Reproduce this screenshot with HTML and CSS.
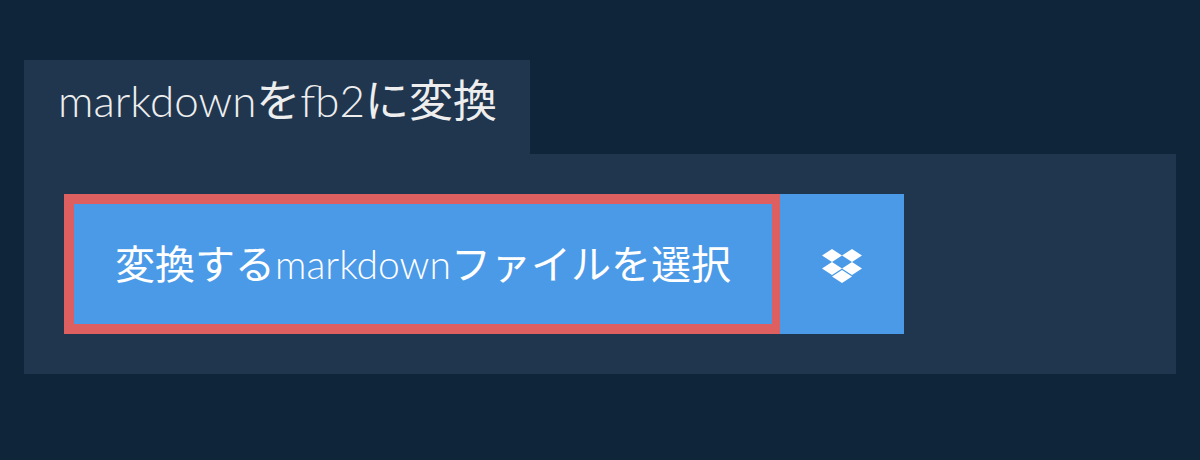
FILE: index.html
```html
<!DOCTYPE html>
<html lang="ja">
  <head>
    <meta charset="UTF-8" />
    <title>markdownをfb2に変換</title>
    <link rel="stylesheet" href="styles.css">
  </head>
  <body>
    <div class="converter">
      <h1 class="tab"><span class="latin">markdown</span>を<span class="latin">fb2</span>に変換</h1>
      <div class="panel">
        <button class="btn btn-select">変換する<span class="latin">markdown</span>ファイルを選択</button>
        <button class="btn btn-dropbox" aria-label="Dropbox">
          <svg class="dropbox-icon" viewBox="0 0 40 34" width="40" height="34">
            <path d="M10 0 20 6.5 10 13 0 6.5zM30 0 40 6.5 30 13 20 6.5zM10 13 20 19.5 10 26 0 19.5zM30 13 40 19.5 30 26 20 19.5zM20 21 30 27.5 20 34 10 27.5z" fill="#fff"/>
          </svg>
        </button>
      </div>
    </div>
  </body>
</html>
```

FILE: styles.css
```css
html,
body {
  height: 100%;
  margin: 0;
}
body {
  background-color: #0f2539;
  font-family: Lato, "Noto Sans CJK JP", sans-serif;
  color: #fff;
}
.converter {
  padding: 60px 24px 0;
}
.latin {
  font-weight: 300;
}
.tab {
  display: inline-block;
  margin: 0;
  padding: 0 33px 0 34px;
  height: 94px;
  line-height: 80px;
  font-size: 44px;
  font-weight: 400;
  color: #eeeeee;
  background-color: #20364f;
  vertical-align: top;
}
.panel {
  display: flex;
  padding: 40px;
  background-color: #20364f;
}
.btn {
  height: 140px;
  border: none;
  color: #fff;
  background-color: #4b9ae8;
  font-family: inherit;
  cursor: pointer;
}
.btn-select {
  width: 716px;
  padding: 0 0 4px;
  border: 10px solid #de5f5f;
  border-right-width: 8px;
  font-size: 40px;
  font-weight: 400;
}
.btn-select .latin {
  font-size: 39px;
}
.btn-dropbox {
  display: flex;
  align-items: center;
  justify-content: center;
  width: 124px;
  padding: 4px 0 0;
}
.dropbox-icon {
  display: block;
}
```
